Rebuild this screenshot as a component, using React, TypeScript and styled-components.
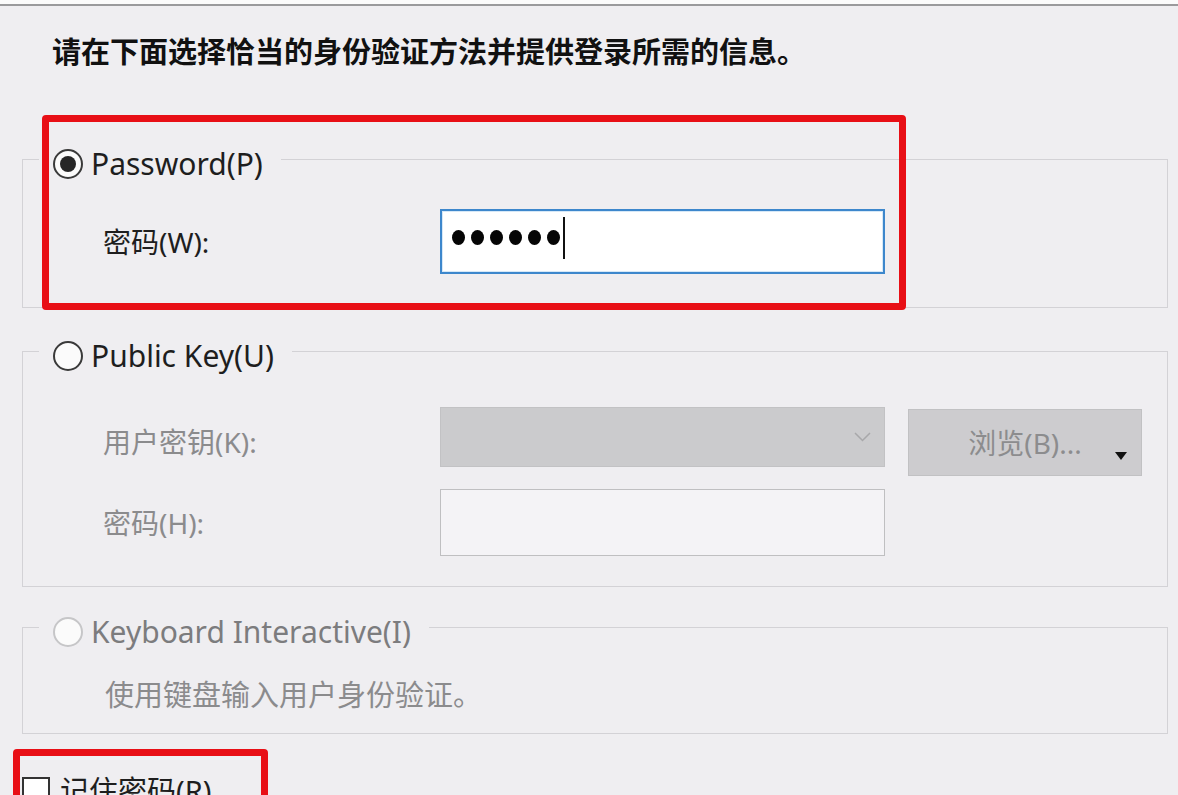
import React from "react";
import styled, { createGlobalStyle, css } from "styled-components";

const GlobalStyle = createGlobalStyle`
  html, body {
    margin: 0;
    padding: 0;
    background: #efeef1;
  }
  * { box-sizing: border-box; }
  body {
    font-family: "Noto Sans", "Noto Sans CJK SC", sans-serif;
    color: #1e1e1e;
  }
`;

const Page = styled.div`
  position: relative;
  height: 795px;
  overflow: hidden;
  background: #efeef1;
`;

const TopStrip = styled.div`
  height: 6px;
  background: #fbfbfb;
  border-bottom: 2px solid #9a9a9c;
`;

const Content = styled.div`
  padding: 0 10px 0 22px;
`;

const Heading = styled.div`
  margin: 24px 0 0 30px;
  font-family: "Noto Sans CJK SC", sans-serif;
  font-size: 29px;
  line-height: 40px;
  font-weight: 700;
  color: #111;
  white-space: nowrap;
`;

const GroupBox = styled.fieldset<{ $mt: number }>`
  margin: ${(p) => p.$mt}px 0 0 0;
  padding: 0;
  border: 1px solid #d3d2d6;
  min-inline-size: 0;
`;

const GroupLegend = styled.legend`
  margin-left: 16px;
  padding: 10px 18px 0 14px;
  display: flex;
  align-items: center;
  gap: 8px;
  height: 40px;
`;

type RadioState = "checked" | "unchecked" | "disabled";

const RadioMark = styled.span<{ $state: RadioState }>`
  width: 30px;
  height: 30px;
  border-radius: 50%;
  flex: none;
  display: flex;
  align-items: center;
  justify-content: center;
  background: #fbfbfb;
  border: 2.5px solid ${(p) => (p.$state === "disabled" ? "#c6c6c8" : "#3a3a3a")};
  ${(p) =>
    p.$state === "checked" &&
    css`
      &::after {
        content: "";
        width: 16px;
        height: 16px;
        border-radius: 50%;
        background: #262626;
      }
    `}
`;

const LegendText = styled.span<{ $disabled?: boolean }>`
  font-size: 30px;
  line-height: 30px;
  color: ${(p) => (p.$disabled ? "#7c7c7e" : "#1e1e1e")};
  white-space: nowrap;
`;

const GroupBody = styled.div<{ $pt: number; $pb: number }>`
  padding: ${(p) => p.$pt}px 0 ${(p) => p.$pb}px 80px;
  display: flex;
  flex-direction: column;
  gap: 13px;
`;

const FieldRow = styled.div`
  display: grid;
  grid-template-columns: 314px 445px 234px;
  column-gap: 23px;
  align-items: start;
`;

const FieldLabel = styled.span<{ $disabled?: boolean }>`
  align-self: center;
  font-size: 28px;
  line-height: 40px;
  color: ${(p) => (p.$disabled ? "#8b8b8d" : "#1e1e1e")};
  white-space: nowrap;
`;

const FocusedBox = styled.div`
  height: 65px;
  background: #ffffff;
  border: 2px solid #3d87cc;
  box-shadow: inset 0 0 0 1px #d6e8f7;
  display: flex;
  align-items: center;
  gap: 6px;
  padding: 0 0 8px 10px;
`;

const Dot = styled.span`
  width: 13px;
  height: 15px;
  border-radius: 50%;
  background: #050505;
  flex: none;
`;

const Caret = styled.span`
  width: 2px;
  height: 42px;
  background: #111;
  margin-left: -3px;
`;

const ComboBox = styled.div`
  height: 60px;
  background: #cbcbcd;
  border: 1px solid #c2c2c4;
  display: flex;
  align-items: center;
  justify-content: flex-end;
  padding-right: 13px;
`;

const BrowseButton = styled.div`
  margin-top: 2px;
  height: 67px;
  background: #cdcccf;
  border: 1px solid #c1c1c3;
  display: grid;
  grid-template-columns: 1fr auto 1fr;
  align-items: center;
`;

const ButtonText = styled.span`
  grid-column: 2;
  font-size: 28px;
  line-height: 40px;
  color: #8c8c8e;
  white-space: nowrap;
`;

const SplitArrow = styled.svg`
  grid-column: 3;
  justify-self: end;
  align-self: end;
  margin: 0 14px 15px 0;
`;

const PlainBox = styled.div`
  height: 67px;
  background: #f4f3f6;
  border: 1px solid #bfbfc1;
`;

const Description = styled.div`
  padding: 26px 0 20px 82px;
  font-family: "Noto Sans CJK SC", sans-serif;
  font-size: 29px;
  line-height: 40px;
  color: #8b8b8d;
  white-space: nowrap;
`;

const CheckRow = styled.div`
  margin-top: 37px;
  display: flex;
  align-items: center;
  gap: 10px;
  height: 40px;
`;

const CheckBox = styled.span`
  width: 28px;
  height: 28px;
  flex: none;
  background: #ffffff;
  border: 2px solid #333;
`;

const CheckText = styled.span`
  font-size: 29px;
  line-height: 40px;
  color: #1e1e1e;
  white-space: nowrap;
`;

const Highlight = styled.div<{ $x: number; $y: number; $w: number; $h: number }>`
  position: absolute;
  left: ${(p) => p.$x}px;
  top: ${(p) => p.$y}px;
  width: ${(p) => p.$w}px;
  height: ${(p) => p.$h}px;
  border: 7px solid #e80f16;
  border-radius: 4px;
  pointer-events: none;
`;

export default function App() {
  return (
    <Page>
      <GlobalStyle />
      <TopStrip />
      <Content>
        <Heading>请在下面选择恰当的身份验证方法并提供登录所需的信息。</Heading>

        <GroupBox $mt={69}>
          <GroupLegend>
            <RadioMark $state="checked" />
            <LegendText>Password(P)</LegendText>
          </GroupLegend>
          <GroupBody $pt={30} $pb={33}>
            <FieldRow>
              <FieldLabel>密码(W):</FieldLabel>
              <FocusedBox>
                {Array.from({ length: 6 }).map((_, i) => (
                  <Dot key={i} />
                ))}
                <Caret />
              </FocusedBox>
            </FieldRow>
          </GroupBody>
        </GroupBox>

        <GroupBox $mt={23}>
          <GroupLegend>
            <RadioMark $state="unchecked" />
            <LegendText>Public Key(U)</LegendText>
          </GroupLegend>
          <GroupBody $pt={36} $pb={30}>
            <FieldRow>
              <FieldLabel $disabled>用户密钥(K):</FieldLabel>
              <ComboBox>
                <svg width="17" height="10" viewBox="0 0 17 10">
                  <polyline points="1,1 8.5,8.5 16,1" fill="none" stroke="#a8a8aa" strokeWidth="1.5" />
                </svg>
              </ComboBox>
              <BrowseButton>
                <ButtonText>浏览(B)...</ButtonText>
                <SplitArrow width="12" height="8" viewBox="0 0 12 8">
                  <polygon points="0,0 12,0 6,8" fill="#111" />
                </SplitArrow>
              </BrowseButton>
            </FieldRow>
            <FieldRow>
              <FieldLabel $disabled>密码(H):</FieldLabel>
              <PlainBox />
            </FieldRow>
          </GroupBody>
        </GroupBox>

        <GroupBox $mt={20}>
          <GroupLegend>
            <RadioMark $state="disabled" />
            <LegendText $disabled>Keyboard Interactive(I)</LegendText>
          </GroupLegend>
          <Description>使用键盘输入用户身份验证。</Description>
        </GroupBox>

        <CheckRow>
          <CheckBox />
          <CheckText>记住密码(R)</CheckText>
        </CheckRow>
      </Content>

      <Highlight $x={42} $y={115} $w={864} $h={195} />
      <Highlight $x={13} $y={749} $w={255} $h={90} />
    </Page>
  );
}
